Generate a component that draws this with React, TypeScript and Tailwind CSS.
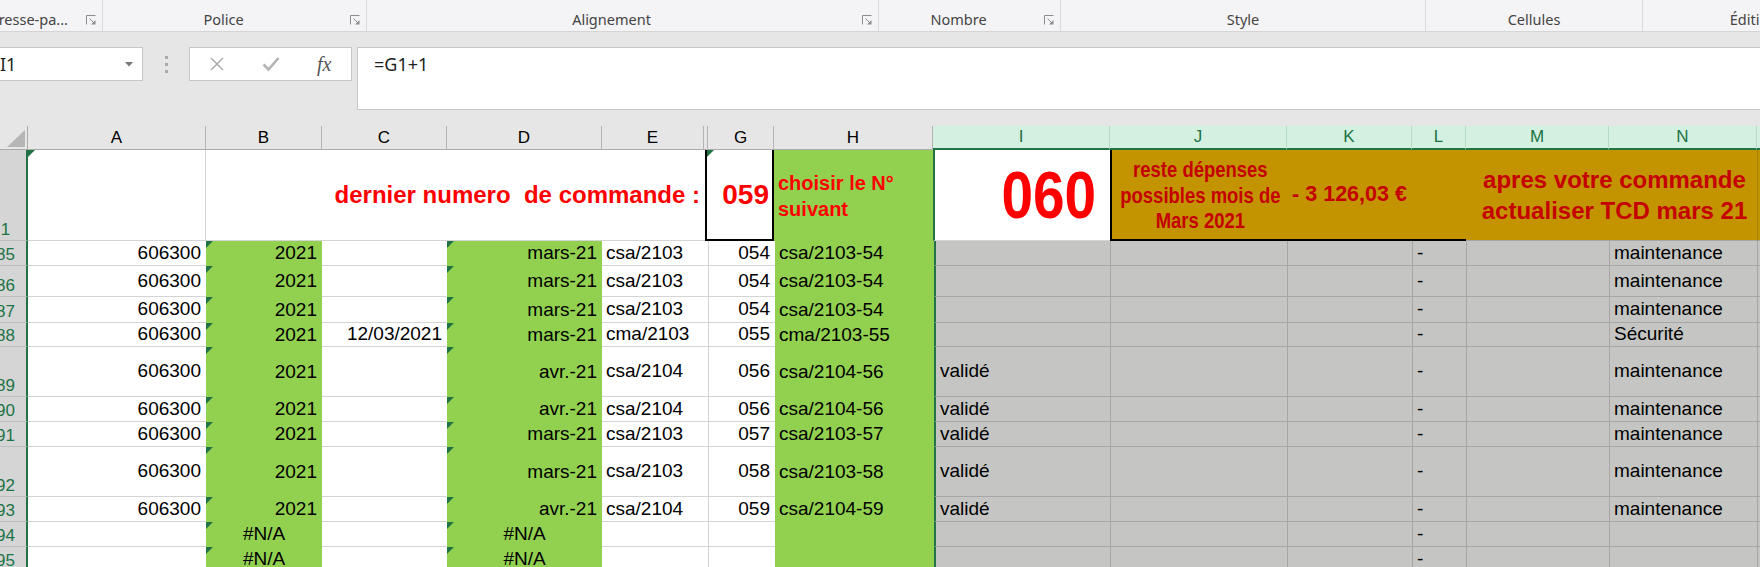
import React from 'react';

const SANS = "font-['Liberation_Sans',Arial,sans-serif]";
const UI = "font-['Noto_Sans','Open_Sans',sans-serif]";

type Kind = 'white' | 'green' | 'sel';

function Launcher() {
  return (
    <svg width="10" height="10" viewBox="0 0 10 10" className="shrink-0">
      <path d="M0.5 9.5V0.5H9.5" fill="none" stroke="#8c8c8c" strokeWidth="1" />
      <path d="M3.5 3.5L8 8" fill="none" stroke="#8c8c8c" strokeWidth="1" />
      <path d="M9.5 5V9.5H5Z" fill="#8c8c8c" />
    </svg>
  );
}

function Group({ w, label, launcher, clip }: { w: string; label: string; launcher?: boolean; clip?: boolean }) {
  return (
    <div className={`${w} shrink-0 h-full flex items-center border-r border-[#dadada]`}>
      <div className={`flex-1 min-w-0 flex pt-[8px] ${clip ? 'justify-end pr-[12px]' : 'justify-center'}`}>
        <span className="whitespace-nowrap shrink-0">{label}</span>
      </div>
      {launcher && (
        <div className="w-[22px] shrink-0 flex justify-center pt-[8px]">
          <Launcher />
        </div>
      )}
    </div>
  );
}

function Ribbon() {
  return (
    <div className={`flex h-[32px] bg-[#f4f3f6] border-b border-[#d5d5d5] text-[14.5px] text-[#444] ${UI}`}>
      <Group w="w-[103px]" label="Presse-pa..." launcher clip />
      <Group w="w-[264px]" label="Police" launcher />
      <Group w="w-[512px]" label="Alignement" launcher />
      <Group w="w-[182px]" label="Nombre" launcher />
      <Group w="w-[365px]" label="Style" />
      <Group w="w-[217px]" label="Cellules" />
      <Group w="w-[222px]" label="Édition" />
    </div>
  );
}

function FormulaBar() {
  return (
    <div className={`flex items-start h-[94px] bg-[#e6e6e6] pt-[15px] ${UI}`}>
      <div className="ml-[-6px] w-[149px] h-[34px] shrink-0 bg-white border border-[#c6c6c6] flex items-center justify-between pl-[5px] pr-[9px]">
        <span className="text-[18px] text-[#222]">I1</span>
        <svg width="8" height="5" viewBox="0 0 8 5">
          <path d="M0 0H8L4 4.5Z" fill="#777" />
        </svg>
      </div>
      <div className="w-[46px] h-[34px] shrink-0 flex flex-col items-center justify-center gap-[4px]">
        <span className="w-[3px] h-[3px] bg-[#a9a9a9]" />
        <span className="w-[3px] h-[3px] bg-[#a9a9a9]" />
        <span className="w-[3px] h-[3px] bg-[#a9a9a9]" />
      </div>
      <div className="w-[163px] h-[34px] shrink-0 bg-white border border-[#c6c6c6] flex items-center">
        <div className="w-[54px] flex justify-center">
          <svg width="16" height="16" viewBox="0 0 16 16">
            <path d="M2 2L14 14M14 2L2 14" stroke="#a6a6a6" strokeWidth="1.4" fill="none" />
          </svg>
        </div>
        <div className="w-[54px] flex justify-center">
          <svg width="18" height="16" viewBox="0 0 18 16">
            <path d="M1.5 8.5L6.5 13.5L16.5 2" stroke="#b4b4b4" strokeWidth="2.6" fill="none" />
          </svg>
        </div>
        <div className="w-[54px] flex justify-center">
          <span className="font-['Liberation_Serif',serif] italic text-[20px] text-[#555] leading-none">fx</span>
        </div>
      </div>
      <div className="ml-[5px] flex-1 h-[63px] bg-white border border-[#c6c6c6] border-r-0 pl-[16px]">
        <span className="text-[18px] leading-[32px] text-[#222]">=G1+1</span>
      </div>
    </div>
  );
}

const cols: { key: string; w: string; sel: boolean }[] = [
  { key: 'A', w: 'w-[178px]', sel: false },
  { key: 'B', w: 'w-[116px]', sel: false },
  { key: 'C', w: 'w-[125px]', sel: false },
  { key: 'D', w: 'w-[155px]', sel: false },
  { key: 'E', w: 'w-[102px]', sel: false },
  { key: '', w: 'w-[4px]', sel: false },
  { key: 'G', w: 'w-[66px]', sel: false },
  { key: 'H', w: 'w-[159px]', sel: false },
  { key: 'I', w: 'w-[177px]', sel: true },
  { key: 'J', w: 'w-[177px]', sel: true },
  { key: 'K', w: 'w-[125px]', sel: true },
  { key: 'L', w: 'w-[54px]', sel: true },
  { key: 'M', w: 'w-[143px]', sel: true },
  { key: 'N', w: 'w-[148px]', sel: true },
  { key: 'O', w: 'w-[80px]', sel: true },
];

function HeaderRow() {
  return (
    <div className={`flex h-[24px] bg-[#e6e6e6] text-[17px] ${SANS}`}>
      <div className="w-[28px] shrink-0 border-r border-b border-[#ababab] flex items-end justify-end pr-[2px] pb-[2px]">
        <svg width="18" height="17" viewBox="0 0 18 17">
          <path d="M18 0V17H0Z" fill="#b6b6b6" />
        </svg>
      </div>
      {cols.map((c, i) => (
        <div
          key={i}
          className={`${c.w} shrink-0 flex items-center justify-center ${
            c.sel
              ? 'bg-[#d3f0e0] text-[#217346] border-r border-r-[#b7dcc6] border-b-2 border-b-[#217346]'
              : 'text-black border-r border-r-[#b4b4b4] border-b border-b-[#ababab]'
          }`}
        >
          {c.key}
        </div>
      ))}
    </div>
  );
}

function RowHead({ n, h }: { n: string; h: string }) {
  return (
    <div className={`${h} w-[28px] shrink-0 overflow-hidden bg-[#d5d5d5] border-r-2 border-r-[#217346] border-b border-b-[#bdbdbd] flex items-end`}>
      <span className="block w-[42px] -ml-[15px] text-center text-[17px] leading-[20px] text-[#217346]">{n}</span>
    </div>
  );
}

function Tri() {
  return <span className="absolute left-0 top-0 w-0 h-0 border-t-[7px] border-t-[#217346] border-r-[7px] border-r-transparent" />;
}

function Cell({
  w,
  kind,
  align = 'left',
  tri,
  extra = '',
  children,
}: {
  w: string;
  kind: Kind;
  align?: 'left' | 'right' | 'center';
  tri?: boolean;
  extra?: string;
  children?: React.ReactNode;
}) {
  const bg =
    kind === 'green'
      ? 'bg-[#92d050]'
      : kind === 'sel'
      ? 'bg-[#c5c6c3] border-r border-b border-[#a6a6a6]'
      : 'bg-white border-b border-b-[#d4d4d4]';
  const al = align === 'right' ? 'justify-end pr-[5px]' : align === 'center' ? 'justify-center' : 'justify-start pl-[4px]';
  return (
    <div className={`${w} relative shrink-0 h-full flex items-center whitespace-nowrap overflow-hidden ${bg} ${al} ${extra}`}>
      {tri && <Tri />}
      {children}
    </div>
  );
}

type Data = {
  n: string;
  h: string;
  a: string;
  b: string;
  c: string;
  d: string;
  e: string;
  g: string;
  hh: string;
  i: string;
  nn: string;
};

const full = (n: string, h: string, c: string, d: string, e: string, g: string, hh: string, i: string, nn: string): Data => ({
  n,
  h,
  a: '606300',
  b: '2021',
  c,
  d,
  e,
  g,
  hh,
  i,
  nn,
});

const blank = (n: string, h: string): Data => ({ n, h, a: '', b: '#N/A', c: '', d: '#N/A', e: '', g: '', hh: '', i: '', nn: '' });

const rows: Data[] = [
  full('85', 'h-[25px]', '', 'mars-21', 'csa/2103', '054', 'csa/2103-54', '', 'maintenance'),
  full('86', 'h-[31px]', '', 'mars-21', 'csa/2103', '054', 'csa/2103-54', '', 'maintenance'),
  full('87', 'h-[26px]', '', 'mars-21', 'csa/2103', '054', 'csa/2103-54', '', 'maintenance'),
  full('88', 'h-[24px]', '12/03/2021', 'mars-21', 'cma/2103', '055', 'cma/2103-55', '', 'Sécurité'),
  full('89', 'h-[50px]', '', 'avr.-21', 'csa/2104', '056', 'csa/2104-56', 'validé', 'maintenance'),
  full('90', 'h-[25px]', '', 'avr.-21', 'csa/2104', '056', 'csa/2104-56', 'validé', 'maintenance'),
  full('91', 'h-[25px]', '', 'mars-21', 'csa/2103', '057', 'csa/2103-57', 'validé', 'maintenance'),
  full('92', 'h-[50px]', '', 'mars-21', 'csa/2103', '058', 'csa/2103-58', 'validé', 'maintenance'),
  full('93', 'h-[25px]', '', 'avr.-21', 'csa/2104', '059', 'csa/2104-59', 'validé', 'maintenance'),
  blank('94', 'h-[25px]'),
  blank('95', 'h-[25px]'),
];

function DataRow({ r }: { r: Data }) {
  const na = r.b === '#N/A';
  return (
    <div className={`flex ${r.h} text-[19px] text-black`}>
      <RowHead n={r.n} h={r.h} />
      <Cell w="w-[178px]" kind="white" align="right">{r.a}</Cell>
      <Cell w="w-[116px]" kind="green" align={na ? 'center' : 'right'} tri>{r.b}</Cell>
      <Cell w="w-[125px]" kind="white" align="right">{r.c}</Cell>
      <Cell w="w-[155px]" kind="green" align={na ? 'center' : 'right'} tri>{r.d}</Cell>
      <Cell w="w-[102px]" kind="white" extra="pl-[2px]">{r.e}</Cell>
      <Cell w="w-[4px]" kind="white" extra="border-r border-r-[#d4d4d4] pl-0" />
      <Cell w="w-[66px]" kind="white" align="right" extra="pr-[4px]">{r.g}</Cell>
      <Cell w="w-[159px]" kind="green">{r.hh}</Cell>
      <Cell w="w-[177px]" kind="sel" extra="border-l-2 border-l-[#217346] pl-[2px]">{r.i}</Cell>
      <Cell w="w-[177px]" kind="sel" />
      <Cell w="w-[125px]" kind="sel" />
      <Cell w="w-[54px]" kind="sel">-</Cell>
      <Cell w="w-[143px]" kind="sel" />
      <Cell w="w-[148px]" kind="sel">{r.nn}</Cell>
      <Cell w="w-[80px]" kind="sel" />
    </div>
  );
}

function FirstRow() {
  return (
    <div className="flex h-[91px]">
      <RowHead n="1" h="h-[91px]" />
      <Cell w="w-[178px]" kind="white" tri extra="border-r border-r-[#d4d4d4]" />
      <Cell w="w-[499px]" kind="white" align="right" extra="pr-[3px]">
        <span className="whitespace-pre font-bold text-[24px] text-[#ff0000]">dernier numero  de commande :</span>
      </Cell>
      <div className="w-[69px] h-full shrink-0 relative bg-white border-2 border-t-0 border-black flex items-center justify-end pr-[3px]">
        <Tri />
        <span className="font-bold text-[28px] text-[#ff0000]">059</span>
      </div>
      <div className="w-[159px] h-full shrink-0 bg-[#92d050] flex items-center pl-[4px]">
        <span className="font-bold text-[20px] leading-[26px] text-[#ff0000] whitespace-nowrap">
          choisir le N°
          <br />
          suivant
        </span>
      </div>
      <div className="w-[177px] h-full shrink-0 bg-white border-l-2 border-l-[#217346] border-b border-b-[#d4d4d4] flex items-center justify-end pr-[14px]">
        <span className="inline-block origin-right scale-x-[0.86] font-bold text-[66px] leading-none text-[#ff0000]">060</span>
      </div>
      <div className="w-[177px] h-full shrink-0 bg-[#c39400] border-l-2 border-l-black border-b-2 border-b-black flex items-center justify-center pl-[2px] pt-[2px]">
        <span className="inline-block scale-x-[0.84] font-bold text-[22px] leading-[25.5px] text-[#c40000] text-center whitespace-nowrap">
          reste dépenses
          <br />
          possibles mois de
          <br />
          Mars 2021
        </span>
      </div>
      <div className="w-[125px] h-full shrink-0 bg-[#c39400] border-b-2 border-b-black flex items-center justify-center">
        <span className="font-bold text-[21.5px] whitespace-nowrap text-[#c40000]">- 3 126,03 €</span>
      </div>
      <div className="w-[54px] h-full shrink-0 bg-[#c39400] border-b-2 border-b-black" />
      <div className="w-[291px] h-full shrink-0 bg-[#c39400] border-b border-b-[#a6a6a6] flex items-center justify-center pl-[6px]">
        <span className="font-bold text-[24px] leading-[31px] text-[#c40000] text-center whitespace-nowrap">
          apres votre commande
          <br />
          actualiser TCD mars 21
        </span>
      </div>
      <div className="w-[80px] h-full shrink-0 bg-[#c39400] border-b border-b-[#a6a6a6] border-l border-l-[#a68000]" />
    </div>
  );
}

export default function App() {
  return (
    <div className={`w-[1760px] h-[567px] overflow-hidden bg-white ${SANS}`}>
      <Ribbon />
      <FormulaBar />
      <HeaderRow />
      <div className={SANS}>
        <FirstRow />
        {rows.map((r) => (
          <DataRow key={r.n} r={r} />
        ))}
      </div>
    </div>
  );
}
